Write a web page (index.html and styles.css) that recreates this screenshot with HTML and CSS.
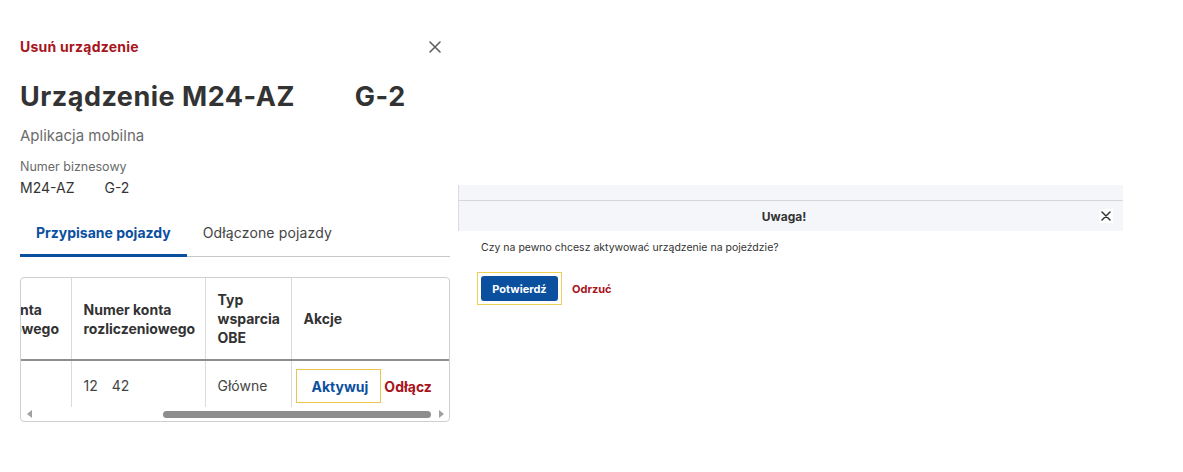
FILE: index.html
```html
<!DOCTYPE html>
<html lang="pl">
<head>
<meta charset="utf-8">
<title>Usuń urządzenie</title>
<link rel="stylesheet" href="styles.css">
</head>
<body>
<div class="page">
  <section class="device">
    <div class="device-head">
      <span class="danger-title">Usuń urządzenie</span>
      <button class="icon-close" aria-label="Zamknij">
        <svg width="12" height="12" viewBox="0 0 12 12"><path d="M1 1L11 11M11 1L1 11" stroke="#5a5a5a" stroke-width="1.5" stroke-linecap="round"/></svg>
      </button>
    </div>
    <h1 class="device-title">Urządzenie M24-AZ<span class="gap-title"></span>G-2</h1>
    <p class="device-sub">Aplikacja mobilna</p>
    <div class="field">
      <div class="field-label">Numer biznesowy</div>
      <div class="field-value">M24-AZ<span class="gap-value"></span>G-2</div>
    </div>
    <nav class="tabs">
      <span class="tab tab-active">Przypisane pojazdy</span>
      <span class="tab">Odłączone pojazdy</span>
    </nav>
    <div class="table-box">
      <div class="table-viewport">
        <table class="grid">
          <colgroup>
            <col class="c1"><col class="c2"><col class="c3"><col class="c4">
          </colgroup>
          <thead>
            <tr>
              <th>Numer konta<br>podstawowego</th>
              <th>Numer konta<br>rozliczeniowego</th>
              <th>Typ<br>wsparcia<br>OBE</th>
              <th>Akcje</th>
            </tr>
          </thead>
          <tbody>
            <tr>
              <td></td>
              <td>12<span class="gap-num"></span>42</td>
              <td>Główne</td>
              <td class="actions"><button class="btn-outline">Aktywuj</button><button class="btn-link-red">Odłącz</button></td>
            </tr>
          </tbody>
        </table>
      </div>
      <div class="scrollbar">
        <span class="arrow arrow-left"></span>
        <div class="track"><div class="thumb"></div></div>
        <span class="arrow arrow-right"></span>
      </div>
    </div>
  </section>

  <section class="dialog">
    <div class="dialog-band"></div>
    <div class="dialog-head">
      <span class="dialog-title">Uwaga!</span>
      <button class="dialog-close" aria-label="Zamknij">
        <svg width="10" height="10" viewBox="0 0 10 10"><path d="M1 1L9 9M9 1L1 9" stroke="#333" stroke-width="1.5" stroke-linecap="round"/></svg>
      </button>
    </div>
    <div class="dialog-body">
      <p class="dialog-text">Czy na pewno chcesz aktywować urządzenie na pojeździe?</p>
      <div class="dialog-actions">
        <span class="focus-ring"><button class="btn-primary">Potwierdź</button></span>
        <button class="btn-link-red small">Odrzuć</button>
      </div>
    </div>
  </section>
</div>
</body>
</html>
```

FILE: styles.css
```css
* { box-sizing: border-box; }
body {
  margin: 0;
  background: #fff;
  color: #333;
  font-family: Inter, "Noto Sans", sans-serif;
}
button { font-family: inherit; cursor: pointer; }
.page { display: flex; align-items: flex-start; }

/* left panel */
.device { width: 450px; padding: 37px 0 0 20px; flex: none; }
.device-head { display: flex; align-items: center; justify-content: space-between; height: 20px; }
.danger-title { color: #a8141c; font-weight: 700; font-size: 14px; line-height: 20px; letter-spacing: 0.25px; }
.icon-close { border: 0; background: none; padding: 0; width: 12px; height: 12px; margin-right: 9px; display: flex; }
.device-title { margin: 22px 0 0; font-size: 27px; line-height: 36px; font-weight: 700; color: #333; letter-spacing: 0.5px; }
.gap-title { display: inline-block; width: 60px; }
.device-sub { margin: 10px 0 0; font-size: 15px; line-height: 22px; color: #6b6b6b; }
.field { margin-top: 11px; }
.field-label { font-size: 12.5px; line-height: 18px; color: #6b6b6b; }
.field-value { margin-top: 2px; font-size: 14px; line-height: 20px; color: #333; }
.gap-value { display: inline-block; width: 30px; }

.tabs { display: flex; margin-top: 15px; border-bottom: 1px solid #c8c8c8; }
.tab { padding: 10px 16px 11px; font-size: 14px; line-height: 20px; color: #444; margin-bottom: -1px; border-bottom: 3px solid transparent; letter-spacing: 0.15px; }
.tab-active { color: #0b4f9f; font-weight: 700; border-bottom-color: #0b4f9f; letter-spacing: 0; }

.table-box { margin-top: 20px; border: 1px solid #cfcfcf; border-radius: 4px; overflow: hidden; }
.table-viewport { overflow: hidden; height: 129px; }
.grid { border-collapse: collapse; table-layout: fixed; width: 507px; margin-left: -79px; }
.c1 { width: 129px; }
.c2 { width: 134px; }
.c3 { width: 86px; }
.c4 { width: 158px; }
.grid th { text-align: left; font-size: 14px; line-height: 19px; font-weight: 700; color: #333; padding: 12px 10px 12px 12px; height: 81px; border-right: 1px solid #dadada; border-bottom: 2px solid #8e8e8e; vertical-align: middle; white-space: nowrap; }
.grid td { font-size: 14px; line-height: 20px; color: #444; padding: 8px 10px 8px 12px; height: 49px; border-right: 1px solid #dadada; vertical-align: middle; white-space: nowrap; }
.grid th:last-child, .grid td:last-child { border-right: 0; }
.grid td.actions { padding-left: 4px; padding-right: 0; }
.gap-num { display: inline-block; width: 14px; }
.btn-outline { height: 34px; padding: 0 12px 0 15px; border: 1px solid #eac54f; background: #fff; color: #0b4f9f; font-weight: 700; font-size: 14px; }
.btn-link-red { border: 0; background: none; padding: 0 0 0 3px; color: #a8141c; font-weight: 700; font-size: 14px; }
.btn-link-red.small { font-size: 11px; padding: 0; margin-left: 10px; }

.scrollbar { display: flex; align-items: center; height: 14px; padding: 0 5px 0 5px; }
.arrow { width: 0; height: 0; border-top: 4px solid transparent; border-bottom: 4px solid transparent; }
.arrow-left { border-right: 5px solid #a0a0a0; margin-left: 1px; }
.arrow-right { border-left: 5px solid #a0a0a0; }
.track { flex: 1; display: flex; padding: 0 8px 0 131px; }
.thumb { flex: 1; height: 7px; border-radius: 4px; background: #8d8d8d; margin-top: 1px; }

/* right dialog */
.dialog { width: 665px; margin: 185px 0 0 8px; flex: none; }
.dialog-band { height: 16px; background: #f5f6fa; border-left: 1px solid #dcdcdc; border-bottom: 1px solid #d6d6dc; }
.dialog-head { height: 30px; background: #f5f6fa; border-left: 1px solid #dcdcdc; display: flex; align-items: center; padding-left: 10px; }
.dialog-title { flex: 1; text-align: center; font-size: 12px; font-weight: 700; color: #333; }
.dialog-close { width: 14px; height: 14px; background: #fff; border: 0; padding: 0; margin-right: 10px; display: flex; align-items: center; justify-content: center; }
.dialog-body { padding: 9px 0 0 23px; }
.dialog-text { margin: 0; font-size: 10.5px; line-height: 16px; color: #333; }
.dialog-actions { display: flex; align-items: center; margin: 16px 0 0 -4px; }
.focus-ring { display: inline-flex; border: 1px solid #eccf55; padding: 3px; }
.btn-primary { width: 77px; height: 25px; background: #0b4f9f; color: #fff; border: 0; border-radius: 3px; font-size: 11px; font-weight: 700; }
```
